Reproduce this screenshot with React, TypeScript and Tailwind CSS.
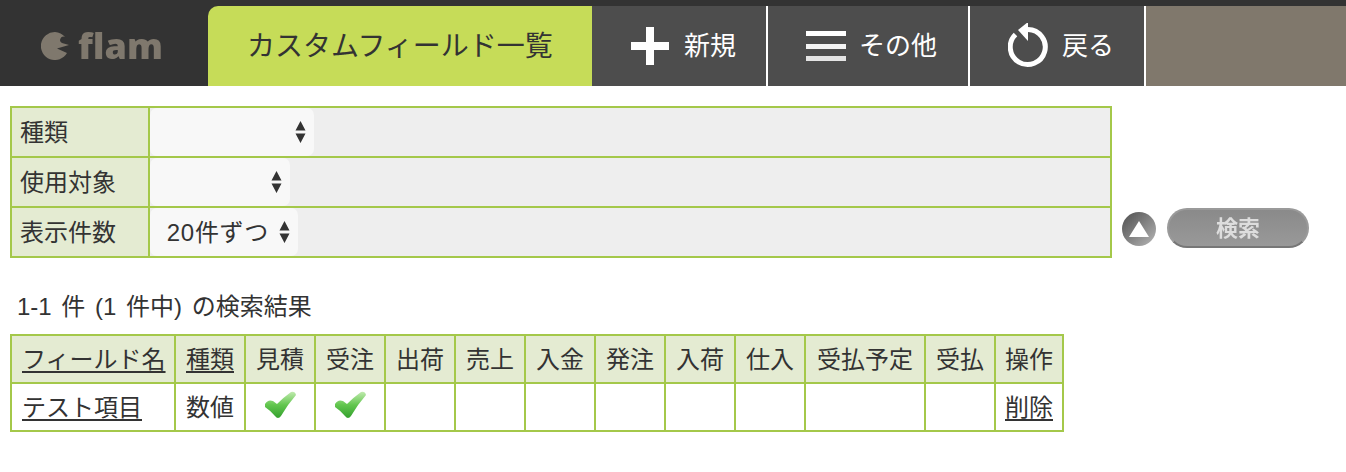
import { Fragment } from 'react';

const headers = ['見積', '受注', '出荷', '売上', '入金', '発注', '入荷', '仕入', '受払予定', '受払'];
const font = 'font-["Liberation_Sans","Noto_Sans_CJK_JP",sans-serif]';

function Logo() {
  return (
    <div className="flex w-[208px] items-center justify-start pl-[41px] blur-[0.6px]">
      <svg width="28" height="28" viewBox="0 0 28 28" className="mt-[-1px]">
        <path d="M14 0 A14 14 0 1 0 26 21 L16 16.5 L28 13 L21 11 A2.5 2.5 0 0 1 24 5 A14 14 0 0 0 14 0 Z" fill="#7f786d" />
      </svg>
      <span className="ml-[9px] mt-[-1px] text-[36px] font-extrabold leading-none text-[#7f786d] font-['Open_Sans',sans-serif]">flam</span>
    </div>
  );
}

function PlusIcon() {
  return (
    <svg width="38" height="40" viewBox="0 0 38 40">
      <path d="M15 1h8v15h15v8H23v15h-8V24H0v-8h15z" fill="#fff" />
    </svg>
  );
}

function MenuIcon() {
  return (
    <svg width="40" height="32" viewBox="0 0 40 32">
      <rect x="0" y="1" width="40" height="5" fill="#fff" />
      <rect x="0" y="14" width="40" height="5" fill="#f4f4f4" />
      <rect x="0" y="26" width="40" height="5" fill="#e4e4e4" />
    </svg>
  );
}

function BackIcon() {
  return (
    <svg width="40" height="46" viewBox="0 0 40 46" fill="none">
      <path d="M20 6.5 A17.5 17.5 0 1 1 7.5 11.5" stroke="#fff" strokeWidth="5" />
      <path d="M10 7 L20 -1 L20 18 Z" fill="#fff" />
    </svg>
  );
}

function Arrows() {
  return (
    <svg width="11" height="22" viewBox="0 0 11 22">
      <path d="M5.5 0 L10.5 9.5 H0.5 Z M0.5 12.5 H10.5 L5.5 22 Z" fill="#333" />
    </svg>
  );
}

function Check({ id }: { id: string }) {
  return (
    <svg width="32" height="28" viewBox="0 0 32 28" className="mx-auto mt-[-4px] blur-[0.4px]">
      <defs>
        <linearGradient id={id} x1="0" y1="0" x2="0" y2="1">
          <stop offset="0" stopColor="#c0eaae" />
          <stop offset="0.5" stopColor="#62c64e" />
          <stop offset="1" stopColor="#34a02e" />
        </linearGradient>
      </defs>
      <path d="M1 13 Q4 8 9 10 L13 13 Q20 6 27 1 Q31 0 32 4 Q24 13 17 25 Q14 29 11 25 Q7 20 1 16 Z" fill={`url(#${id})`} />
    </svg>
  );
}

function SearchRow({ label, selectWidth, value, last }: { label: string; selectWidth: string; value?: string; last?: boolean }) {
  return (
    <Fragment>
      <div className={`flex w-[138px] shrink-0 items-center border-r-2 border-[#a4c84a] bg-[#e4ebd2] pl-[8px] pt-[2px] text-[24px] text-[#333] ${last ? 'h-[48px]' : 'h-[50px] border-b-2'}`}>
        {label}
      </div>
      <div className={`bg-[#eeeeee] ${last ? 'h-[48px]' : 'h-[50px] border-b-2 border-[#a4c84a]'}`}>
        <div className={`flex h-[48px] items-center justify-end rounded-[7px] bg-[#f8f8f8] pr-[8px] ${selectWidth}`}>
          {value && <span className="mr-[10px] pt-[2px] text-[24px] tracking-[0.7px] text-[#333]">{value}</span>}
          <Arrows />
        </div>
      </div>
    </Fragment>
  );
}

export default function App() {
  return (
    <div className={`h-[472px] w-[1346px] overflow-hidden bg-white text-[#333] ${font}`}>
      {/* Header */}
      <header className="flex h-[86px] bg-[#333333] pt-[6px]">
        <Logo />
        <div className="flex h-[80px] w-[384px] items-center justify-center rounded-tl-[10px] bg-[#c6dc58] pt-[2px] text-[28px] text-[#333]">
          カスタムフィールド一覧
        </div>
        <div className="flex h-[80px] w-[174px] items-center gap-[15px] bg-[#4d4d4d] pl-[39px] text-[26px] text-white">
          <PlusIcon />
          <span className="pt-[1px]">新規</span>
        </div>
        <div className="flex h-[80px] w-[202px] items-center gap-[13px] border-l-2 border-white bg-[#4d4d4d] pl-[38px] text-[26px] text-white">
          <MenuIcon />
          <span className="pt-[1px]">その他</span>
        </div>
        <div className="flex h-[80px] w-[176px] items-center gap-[14px] border-l-2 border-white bg-[#4d4d4d] pl-[38px] text-[26px] text-white">
          <BackIcon />
          <span className="pt-[1px]">戻る</span>
        </div>
        <div className="h-[80px] flex-1 border-l-2 border-white bg-[#80786c]" />
      </header>

      {/* Search form */}
      <div className="ml-[10px] mt-[20px] flex items-end">
        <div className="grid w-[1102px] grid-cols-[138px_1fr] border-2 border-[#a4c84a]">
          <SearchRow label="種類" selectWidth="w-[164px]" />
          <SearchRow label="使用対象" selectWidth="w-[140px]" />
          <SearchRow label="表示件数" selectWidth="w-[148px]" value="20件ずつ" last />
        </div>
        <div className="mb-[10px] ml-[10px] flex items-center gap-[11px]">
          <div className="mt-[2px] flex h-[34px] w-[34px] items-center justify-center rounded-full bg-gradient-to-br from-[#4f4f4f] to-[#b8b8b8] blur-[0.4px]">
            <svg width="20" height="16" viewBox="0 0 20 16"><path d="M10 0 L20 16 H0 Z" fill="#fff" /></svg>
          </div>
          <div className="flex h-[40px] w-[142px] items-center justify-center rounded-full border-2 border-[#9a9a9a] border-b-[#777] bg-gradient-to-b from-[#8a8a8a] to-[#999] text-[22px] font-bold text-[#ddd]">
            <span className="blur-[0.6px]">検索</span>
          </div>
        </div>
      </div>

      <p className="ml-[17px] mt-[34px] text-[24px] leading-[30px] text-[#333] [word-spacing:3px]">1-1 件 (1 件中) の検索結果</p>

      {/* Results */}
      <table className="ml-[10px] mt-[12px] w-[1054px] table-fixed border-collapse border-2 border-[#a4c84a] text-[24px] text-[#333]">
        <colgroup>
          <col className="w-[164px]" />
          <col className="w-[70px]" />
          {headers.map((h) => (
            <col key={h} className={h === '受払予定' ? 'w-[120px]' : 'w-[70px]'} />
          ))}
          <col />
        </colgroup>
        <thead>
          <tr className="h-[48px] bg-[#e4ebd2]">
            <th className="border-2 border-[#a4c84a] p-0 pl-[10px] pt-[1px] text-left font-normal"><span className="underline underline-offset-[3px]">フィールド名</span></th>
            <th className="border-2 border-[#a4c84a] p-0 pt-[1px] font-normal"><span className="underline underline-offset-[3px]">種類</span></th>
            {headers.map((h) => (
              <th key={h} className="border-2 border-[#a4c84a] p-0 pt-[1px] font-normal">{h}</th>
            ))}
            <th className="border-2 border-[#a4c84a] p-0 pt-[1px] font-normal">操作</th>
          </tr>
        </thead>
        <tbody>
          <tr className="h-[48px]">
            <td className="border-2 border-[#a4c84a] p-0 pl-[10px] pt-[1px] text-left"><span className="underline underline-offset-[3px]">テスト項目</span></td>
            <td className="border-2 border-[#a4c84a] p-0 pt-[1px] text-center">数値</td>
            {headers.map((h, i) => (
              <td key={h} className="border-2 border-[#a4c84a] p-0 text-center">{i < 2 && <Check id={`chk${i}`} />}</td>
            ))}
            <td className="border-2 border-[#a4c84a] p-0 pt-[1px] text-center"><span className="underline underline-offset-[3px]">削除</span></td>
          </tr>
        </tbody>
      </table>
    </div>
  );
}
